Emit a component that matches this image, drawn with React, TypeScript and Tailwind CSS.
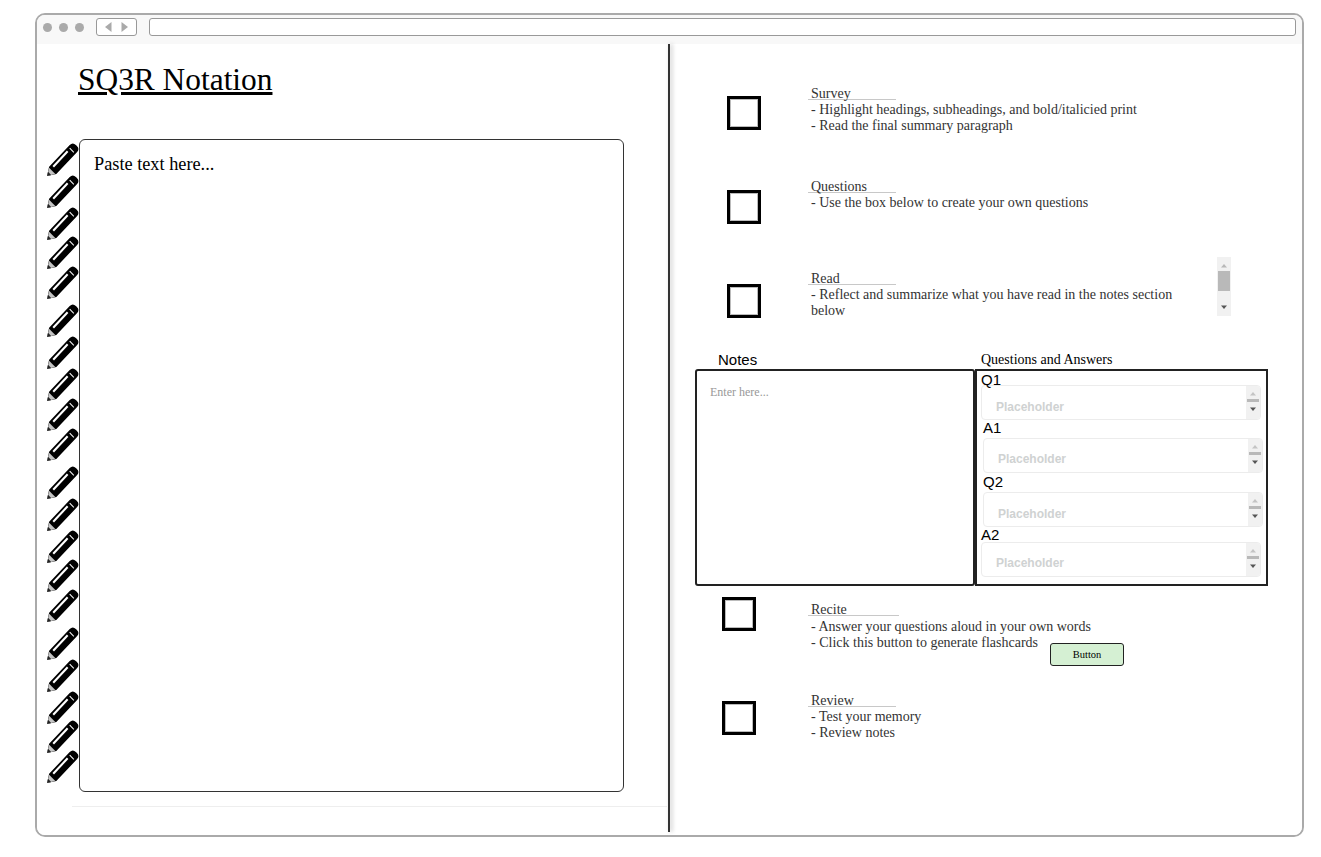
const pencilSlots = [
  "h-[32px]", "h-[32px]", "h-[29px]", "h-[30px]", "h-[38px]",
  "h-[32px]", "h-[32px]", "h-[30px]", "h-[30px]", "h-[38px]",
  "h-[32px]", "h-[32px]", "h-[29px]", "h-[30px]", "h-[38px]",
  "h-[32px]", "h-[32px]", "h-[29px]", "h-[30px]", "h-[34px]",
];

function Pencil() {
  return (
    <svg width="33" height="35" viewBox="0 0 32 34" className="-ml-[1px] block overflow-visible">
      <path d="M1 33 L3 24 L23 3 Q26 0 29 3 L30 4 Q33 7 30 10 L10 31 Z" fill="#000" />
      <path d="M1 33 L3 25 L9 31 Z" fill="#c4c4c4" />
      <path d="M1 33 L2 29 L5 32 Z" fill="#222" />
      <path d="M7 24 L21 9" stroke="#fff" strokeWidth="2" fill="none" />
      <path d="M23 6 L27 10" stroke="#fff" strokeWidth="1" fill="none" />
    </svg>
  );
}

function Check({ className }: { className: string }) {
  return (
    <div className={`h-[34px] w-[34px] shrink-0 border-[3px] border-black bg-white shadow-[inset_0_0_0_1px_#bbbbbb] ${className}`} />
  );
}

function Heading({ children }: { children: string }) {
  return (
    <div className="-ml-[3px] w-[88px] border-b border-[#c8c8c8] pl-[3px] h-[14px] leading-[15px] whitespace-nowrap">
      {children}
    </div>
  );
}

function MiniScroll({ thumb }: { thumb: string }) {
  return (
    <div className="flex w-[14px] shrink-0 flex-col items-center bg-[#f1f1f1]">
      <svg width="8" height="5" viewBox="0 0 8 5" className="mt-[6px] shrink-0">
        <path d="M1 4.5 L4 1 L7 4.5 Z" fill="#b8b8b8" />
      </svg>
      <div className={`w-[12px] bg-[#b9b9b9] ${thumb}`} />
      <div className="flex-1" />
      <svg width="8" height="5" viewBox="0 0 8 5" className="mb-[6px] shrink-0">
        <path d="M1 .5 L4 4 L7 .5 Z" fill="#555" />
      </svg>
    </div>
  );
}

function Field({ className, textTop }: { className: string; textTop: string }) {
  return (
    <div className={`flex h-[35px] w-[280px] overflow-hidden rounded-[4px] border border-[#ececec] bg-white ${className}`}>
      <div className={`flex-1 pl-[14px] font-['Liberation_Sans',sans-serif] text-[12px] font-bold leading-[14px] text-[#cfd2d2] ${textTop}`}>
        Placeholder
      </div>
      <div className="flex w-[14px] shrink-0 flex-col items-center bg-[#f1f1f1]">
        <svg width="8" height="5" viewBox="0 0 8 5" className="mt-[5px] shrink-0">
          <path d="M1 4.5 L4 1 L7 4.5 Z" fill="#c4c4c4" />
        </svg>
        <div className="mt-[3px] h-[3px] w-[12px] bg-[#b9b9b9]" />
        <svg width="8" height="5" viewBox="0 0 8 5" className="mt-[5px] shrink-0">
          <path d="M1 .5 L4 4 L7 .5 Z" fill="#555" />
        </svg>
      </div>
    </div>
  );
}

function QaLabel({ className, children }: { className: string; children: string }) {
  return (
    <div className={`font-['Liberation_Sans',sans-serif] text-[15px] text-black ${className}`}>
      {children}
    </div>
  );
}

export default function App() {
  return (
    <div className="h-[857px] w-[1321px] bg-white pl-[35px] pt-[13px] font-['Liberation_Serif',serif]">
      <div className="flex h-[824px] w-[1269px] flex-col overflow-hidden rounded-[10px] border-2 border-[#aaaaaa]">
        {/* browser chrome */}
        <div className="flex h-[29px] shrink-0 items-start bg-[#f8f8f8] pl-[6px] pt-[3px]">
          <div className="mt-[5px] flex gap-[7px]">
            <span className="h-[9px] w-[9px] rounded-full bg-[#aaaaaa]" />
            <span className="h-[9px] w-[9px] rounded-full bg-[#aaaaaa]" />
            <span className="h-[9px] w-[9px] rounded-full bg-[#aaaaaa]" />
          </div>
          <div className="ml-[12px] flex h-[18px] w-[41px] items-center justify-center gap-[9px] rounded-[3px] border border-[#999999] bg-white">
            <svg width="7" height="10" viewBox="0 0 7 10"><path d="M6.5 0 L0 5 L6.5 10 Z" fill="#aaaaaa" /></svg>
            <svg width="7" height="10" viewBox="0 0 7 10"><path d="M.5 0 L7 5 L.5 10 Z" fill="#aaaaaa" /></svg>
          </div>
          <div className="ml-[12px] h-[18px] w-[1147px] rounded-[3px] border border-[#999999] bg-white" />
        </div>

        <div className="flex min-h-0 flex-1 bg-white">
          {/* left panel */}
          <div className="w-[631px] shrink-0">
            <h1 className="ml-[41px] pt-[17px] text-[31.4px] leading-[37px] text-black underline">SQ3R Notation</h1>
            <div className="mt-[41px] flex pl-[10px]">
              <div className="w-[32px] shrink-0 pt-[3px]">
                {pencilSlots.map((slot, i) => (
                  <div key={i} className={slot}>
                    <Pencil />
                  </div>
                ))}
              </div>
              <div className="h-[653px] w-[545px] rounded-[6px] border border-[#333333] px-[14px] py-[14px] text-[18.3px] leading-[21px] text-black">
                Paste text here...
              </div>
            </div>
            <div className="ml-[35px] mt-[14px] h-px w-[595px] bg-[#eeeeee]" />
          </div>

          {/* divider */}
          <div className="mb-[3px] w-[2px] shrink-0 bg-[#333333] shadow-[2px_0_4px_#bbbbbb]" />

          {/* right panel */}
          <div className="flex-1 text-[14px] leading-[16px] text-[#333333]">
            <div className="flex h-[93px] pl-[57px] pt-[42px]">
              <Check className="mt-[10px]" />
              <div className="ml-[50px]">
                <Heading>Survey</Heading>
                <div className="mt-[2px]">- Highlight headings, subheadings, and bold/italicied print</div>
                <div>- Read the final summary paragraph</div>
              </div>
            </div>
            <div className="flex h-[92px] pl-[57px] pt-[42px]">
              <Check className="mt-[11px]" />
              <div className="ml-[50px]">
                <Heading>Questions</Heading>
                <div className="mt-[2px]">- Use the box below to create your own questions</div>
              </div>
            </div>
            <div className="flex h-[82px] pl-[57px] pt-[28px]">
              <Check className="mt-[27px]" />
              <div className="ml-[50px] flex h-[59px] w-[420px]">
                <div className="w-[365px] pt-[14px]">
                  <Heading>Read</Heading>
                  <div className="mt-[2px]">- Reflect and summarize what you have read in the notes section below</div>
                </div>
                <div className="ml-[41px]">
                  <div className="flex h-[59px]">
                    <MiniScroll thumb="mt-[3px] h-[20px]" />
                  </div>
                </div>
              </div>
            </div>

            {/* notes and questions */}
            <div className="mt-[40px] pl-[25px]">
              <div className="flex h-[18px] leading-[17px]">
                <div className="w-[286px] pl-[23px] font-['Liberation_Sans',sans-serif] text-[15px] text-black">Notes</div>
                <div className="text-black">Questions and Answers</div>
              </div>
              <div className="flex h-[217px]">
                <div className="w-[280px] rounded-[3px] border-2 border-[#222222] px-[13px] pt-[14px] text-[12px] leading-[14px] text-[#999999]">
                  Enter here...
                </div>
                <div className="w-[293px] border-2 border-[#222222] pl-[4px]">
                  <QaLabel className="h-[14px] leading-[17px]">Q1</QaLabel>
                  <Field className="h-[34px]" textTop="pt-[14px]" />
                  <QaLabel className="ml-[2px] h-[18px] leading-[15px]">A1</QaLabel>
                  <Field className="ml-[2px]" textTop="pt-[13px]" />
                  <QaLabel className="ml-[2px] h-[19px] leading-[17px]">Q2</QaLabel>
                  <Field className="ml-[2px]" textTop="pt-[14px]" />
                  <QaLabel className="h-[15px] leading-[15px]">A2</QaLabel>
                  <Field className="" textTop="pt-[13px]" />
                </div>
              </div>
            </div>

            <div className="mt-[11px] flex h-[96px] pl-[52px]">
              <Check className="" />
              <div className="ml-[55px] pt-[5px]">
                <div className="-ml-[3px] h-[14px] w-[91px] border-b border-[#c8c8c8] pl-[3px] leading-[15px]">Recite</div>
                <div className="mt-[3px]">- Answer your questions aloud in your own words</div>
                <div className="flex items-start">
                  <span>- Click this button to generate flashcards</span>
                  <button className="ml-[12px] mt-[8px] h-[23px] w-[74px] shrink-0 rounded-[3px] border-[1.5px] border-[#222222] bg-[#d5f0d3] text-[10.5px] leading-[14px] text-black">
                    Button
                  </button>
                </div>
              </div>
            </div>
            <div className="flex pl-[52px]">
              <Check className="mt-[8px]" />
              <div className="ml-[55px]">
                <Heading>Review</Heading>
                <div className="mt-[2px]">- Test your memory</div>
                <div>- Review notes</div>
              </div>
            </div>
          </div>
        </div>
      </div>
    </div>
  );
}
